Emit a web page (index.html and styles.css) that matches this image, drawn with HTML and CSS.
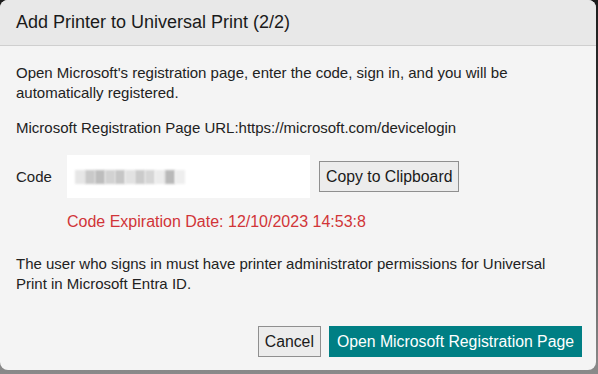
FILE: index.html
```html
<!DOCTYPE html>
<html lang="en">
<head>
  <meta charset="UTF-8" />
  <title>Add Printer to Universal Print</title>
  <link rel="stylesheet" href="styles.css">
</head>
<body>
  <div class="dialog">
    <div class="dialog-header">Add Printer to Universal Print (2/2)</div>
    <div class="dialog-body">
      <p class="intro">Open Microsoft's registration page, enter the code, sign in, and you will be automatically registered.</p>
      <p class="url">Microsoft Registration Page URL:https://microsoft.com/devicelogin</p>

      <div class="code-row">
        <span class="code-label">Code</span>
        <div class="code-box">
          <div class="blur">
            <span style="background:#e6e6e6"></span>
            <span style="background:#c9c9c9"></span>
            <span style="background:#bdbdbd"></span>
            <span style="background:#d2d2d2"></span>
            <span style="background:#c6c6c6"></span>
            <span style="background:#e2e2e2"></span>
            <span style="background:#cbcbcb"></span>
            <span style="background:#d6d6d6"></span>
            <span style="background:#ececec"></span>
            <span style="background:#b9b9b9"></span>
            <span style="background:#eeeeee"></span>
          </div>
        </div>
        <button class="btn">Copy to Clipboard</button>
      </div>
      <div class="expiry">Code Expiration Date: 12/10/2023 14:53:8</div>

      <p class="note">The user who signs in must have printer administrator permissions for Universal Print in Microsoft Entra ID.</p>

      <div class="actions">
        <button class="btn">Cancel</button>
        <button class="btn primary">Open Microsoft Registration Page</button>
      </div>
    </div>
  </div>
</body>
</html>
```

FILE: styles.css
```css
html {
  background: linear-gradient(#1c1c1c, #2a2a2a 20%, #8a8a8a);
  height: 100%;
}
body {
  margin: 0;
  font-family: 'Liberation Sans', Arial, sans-serif;
  color: #222;
}
.dialog {
  width: 596px;
  height: 370px;
  background: #f4f4f4;
  border-radius: 8px;
  overflow: hidden;
  display: flex;
  flex-direction: column;
}
.dialog-header {
  height: 46px;
  box-sizing: border-box;
  padding: 0 16px;
  display: flex;
  align-items: center;
  background: #e8e8e8;
  border-bottom: 1px solid #cfcfcf;
  font-size: 18px;
  color: #1a1a1a;
}
.dialog-body {
  padding: 17px 16px 0;
  font-size: 15px;
  line-height: 20px;
}
.dialog-body p {
  margin: 0;
}
.url {
  margin-top: 15px !important;
}
.code-row {
  display: flex;
  align-items: center;
  margin-top: 17px;
}
.code-label {
  width: 51px;
}
.code-box {
  width: 243px;
  height: 43px;
  background: #fff;
  display: flex;
  align-items: center;
  padding-left: 8px;
  box-sizing: border-box;
}
.blur {
  display: flex;
  height: 14px;
}
.blur span {
  width: 10px;
  height: 14px;
  filter: blur(1px);
}
.btn {
  font-family: 'Liberation Sans', Arial, sans-serif;
  font-size: 15.8px;
  height: 31px;
  padding: 0 6px;
  background: #ececec;
  color: #1a1a1a;
  border: 1px solid #8f8f8f;
  cursor: pointer;
}
.code-row .btn {
  margin-left: 9px;
}
.expiry {
  color: #d13438;
  font-size: 16px;
  margin: 14px 0 0 51px;
}
.note {
  margin-top: 22px !important;
}
.actions {
  display: flex;
  justify-content: flex-end;
  gap: 8px;
  margin: 32px -2px 0 0;
}
.btn.primary {
  background: #007f84;
  border-color: #007f84;
  color: #fff;
  padding: 0 7px;
}
```
